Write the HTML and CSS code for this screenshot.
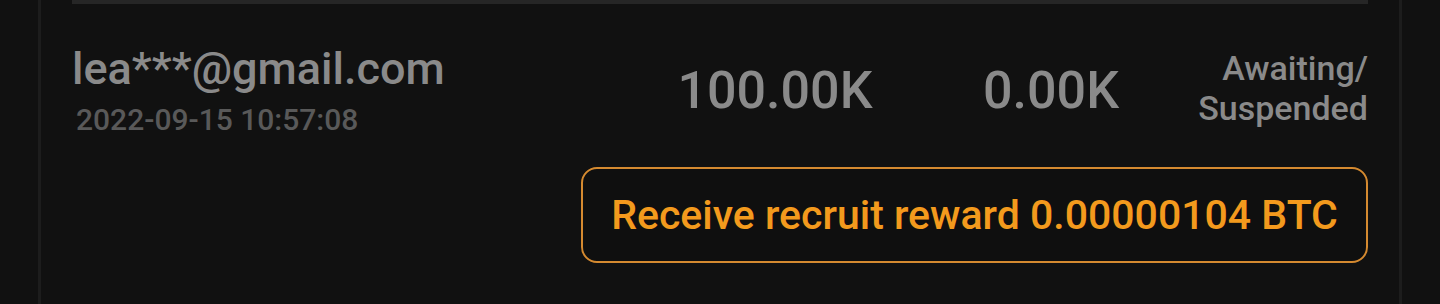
FILE: index.html
```html
<!DOCTYPE html>
<html lang="en">
<head>
    <meta charset="UTF-8">
    <meta name="viewport" content="width=device-width, initial-scale=1.0">
    <title>Recruit records</title>
    <link rel="stylesheet" href="styles.css">
</head>
<body>
    <div class="panel">
        <div class="record">
            <div class="record-row">
                <div class="account">
                    <div class="email">lea***@gmail.com</div>
                    <div class="date">2022-09-15 10:57:08</div>
                </div>
                <div class="amount">100.00K</div>
                <div class="amount">0.00K</div>
                <div class="status">Awaiting/<br>Suspended</div>
            </div>
            <div class="actions">
                <button class="reward-button">Receive recruit reward 0.00000104 BTC</button>
            </div>
        </div>
    </div>
</body>
</html>
```

FILE: styles.css
```css
body {
    margin: 0;
    background-color: #111111;
    font-family: Roboto, "Liberation Sans", sans-serif;
    height: 304px;
    overflow: hidden;
}
.panel {
    margin: 0 38px;
    height: 304px;
    border-left: 3px solid #1d1d1d;
    border-right: 3px solid #1d1d1d;
    padding: 0 31px;
}
.record {
    border-top: 4px solid #262626;
    padding-top: 39px;
}
.record-row {
    display: flex;
    align-items: center;
}
.account {
    flex: 1;
}
.email {
    font-size: 45px;
    font-weight: 500;
    line-height: 52px;
    color: #8a8a8a;
}
.date {
    margin-top: 7px;
    padding-left: 4px;
    font-size: 30px;
    font-weight: 500;
    line-height: 36px;
    color: #595959;
}
.amount {
    width: 276px;
    text-align: center;
    font-size: 52px;
    font-weight: 500;
    line-height: 60px;
    color: #8a8a8a;
}
.status {
    width: 179px;
    margin-bottom: 6px;
    text-align: right;
    font-size: 34px;
    font-weight: 500;
    line-height: 40px;
    color: #8a8a8a;
}
.actions {
    display: flex;
    justify-content: flex-end;
    margin-top: 29px;
}
.reward-button {
    width: 787px;
    height: 96px;
    background-color: #0f0f0f;
    border: 2px solid #d58a30;
    border-radius: 16px;
    color: #f39a1d;
    font-family: Roboto, "Liberation Sans", sans-serif;
    font-size: 41px;
    font-weight: 500;
    cursor: pointer;
}
```
